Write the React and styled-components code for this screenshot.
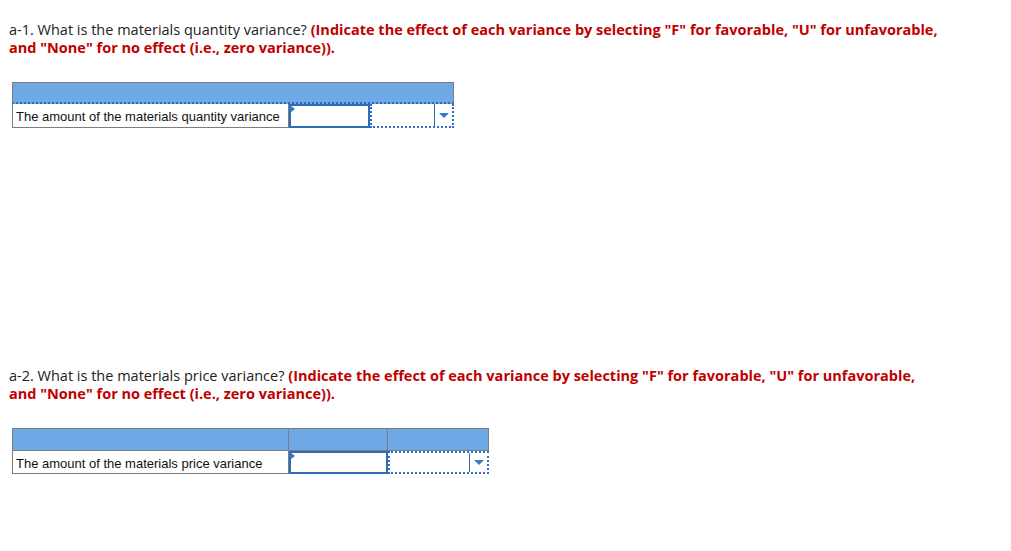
import React from "react";
import styled, { createGlobalStyle } from "styled-components";

const Global = createGlobalStyle`
  html, body { margin: 0; padding: 0; background: #fff; }
  body { font-family: "Open Sans", "Liberation Sans", sans-serif; }
`;

const Page = styled.div`
  padding: 21px 0 0 9px;
  width: 1002px;
  height: 530px;
`;

const Question = styled.p`
  margin: 0;
  width: 990px;
  font-family: "Open Sans", "Liberation Sans", sans-serif;
  font-size: 14.5px;
  line-height: 18px;
  color: #222;
  white-space: nowrap;
`;

const Hint = styled.span`
  color: #c00000;
  font-weight: 700;
`;

const Block = styled.section`
  margin-bottom: ${(p) => p.$gap}px;
`;

const Table = styled.div`
  margin: 25px 0 0 3px;
  width: ${(p) => p.$width}px;
  font-family: "Liberation Sans", Arial, sans-serif;
  font-size: 13px;
  color: #111;
`;

const HeaderBar = styled.div`
  height: 19px;
  background: #6ea9e6;
  border: 1px solid #7d7d7d;
  border-bottom: 2px dotted #2f6fc3;
`;

const HeaderRow = styled.div`
  display: flex;
  height: 23px;
`;

const HeaderCell = styled.div`
  box-sizing: border-box;
  width: ${(p) => p.$w}px;
  background: #6ea9e6;
  border: 1px solid #7d7d7d;
  border-left: ${(p) => (p.$first ? "1px solid #7d7d7d" : "none")};
`;

const Row = styled.div`
  display: flex;
  height: ${(p) => p.$h}px;
`;

const LabelCell = styled.div`
  box-sizing: border-box;
  width: ${(p) => p.$w}px;
  border: 1px solid #7d7d7d;
  border-top: none;
  padding: 2px 0 0 3px;
  display: flex;
  align-items: center;
  white-space: nowrap;
`;

const InputCell = styled.div`
  box-sizing: border-box;
  position: relative;
  width: ${(p) => p.$w}px;
  border: 2px solid #2f6cb6;
  background: #fff;
`;

const Flag = styled.span`
  position: absolute;
  left: -1px;
  top: -1px;
  width: 0;
  height: 0;
  border-top: 4px solid transparent;
  border-bottom: 4px solid transparent;
  border-left: 5px solid #3a79c9;
`;

const SelectCell = styled.div`
  box-sizing: border-box;
  width: ${(p) => p.$w}px;
  border: 2px dotted #2f6fc3;
  border-top: ${(p) => (p.$top ? "2px dotted #2f6fc3" : "none")};
  display: flex;
  justify-content: flex-end;
  background: #fff;
`;

const ArrowBox = styled.div`
  width: 17px;
  border-left: 1px solid #2f6cb6;
  display: flex;
  align-items: center;
  justify-content: center;
`;

const Arrow = styled.span`
  width: 0;
  height: 0;
  border-left: 5px solid transparent;
  border-right: 5px solid transparent;
  border-top: 5px solid #3a79c9;
`;

export default function App() {
  return (
    <>
      <Global />
      <Page>
        <Block $gap={239}>
          <Question>
            a-1. What is the materials quantity variance?{" "}
            <Hint>
              (Indicate the effect of each variance by selecting "F" for favorable, "U" for unfavorable,
              <br />
              and "None" for no effect (i.e., zero variance)).
            </Hint>
          </Question>
          <Table $width={442}>
            <HeaderBar />
            <Row $h={24}>
              <LabelCell $w={277}>The amount of the materials quantity variance</LabelCell>
              <InputCell $w={81}>
                <Flag />
              </InputCell>
              <SelectCell $w={84}>
                <ArrowBox>
                  <Arrow />
                </ArrowBox>
              </SelectCell>
            </Row>
          </Table>
        </Block>
        <Block $gap={0}>
          <Question>
            a-2. What is the materials price variance?{" "}
            <Hint>
              (Indicate the effect of each variance by selecting "F" for favorable, "U" for unfavorable,
              <br />
              and "None" for no effect (i.e., zero variance)).
            </Hint>
          </Question>
          <Table $width={477}>
            <HeaderRow>
              <HeaderCell $w={277} $first />
              <HeaderCell $w={99} />
              <HeaderCell $w={101} />
            </HeaderRow>
            <Row $h={23}>
              <LabelCell $w={277}>The amount of the materials price variance</LabelCell>
              <InputCell $w={99}>
                <Flag />
              </InputCell>
              <SelectCell $w={101} $top>
                <ArrowBox>
                  <Arrow />
                </ArrowBox>
              </SelectCell>
            </Row>
          </Table>
        </Block>
      </Page>
    </>
  );
}
